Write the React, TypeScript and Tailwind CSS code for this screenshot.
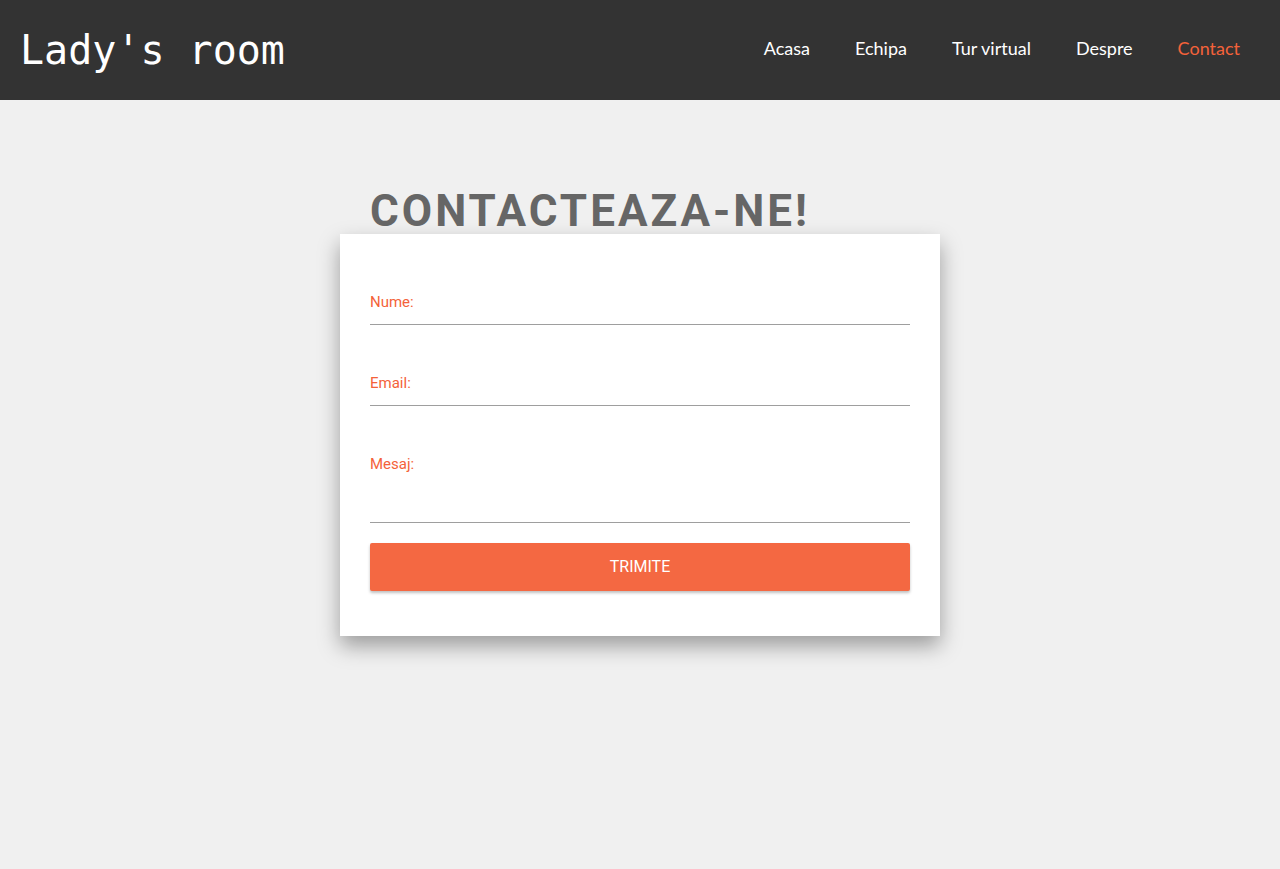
export default function App() {
  const links = ["Acasa", "Echipa", "Tur virtual", "Despre", "Contact"];

  return (
    <div className="min-h-screen bg-[#f0f0f0]">
      <header className="h-[100px] bg-[#333333] flex items-center justify-between pl-5 pr-10">
        <h1 className="text-[40px] text-white font-['DejaVu_Sans_Mono',monospace] leading-none">
          Lady's room
        </h1>
        <nav className="flex gap-[45px] mb-1 font-['Lato',sans-serif] text-[18px]">
          {links.map((l) => (
            <a
              key={l}
              href="#"
              className={l === "Contact" ? "text-[#f4623a]" : "text-white"}
            >
              {l}
            </a>
          ))}
        </nav>
      </header>

      <main className="w-[600px] mx-auto pt-[89px] font-['Roboto',sans-serif]">
        <h2 className="pl-[30px] text-[44px] leading-none font-bold tracking-[3px] text-[#666666]">
          CONTACTEAZA-NE!
        </h2>
        <form
          className="mt-px bg-white px-[30px] pt-[58px] pb-[45px] shadow-[0_10px_20px_rgba(0,0,0,0.35)]"
          onSubmit={(e) => e.preventDefault()}
        >
          <div className="flex flex-col">
            <label className="text-[15px] leading-5 text-[#f4623a]">Nume:</label>
            <input className="h-[13px] border-b border-[#9e9e9e] outline-none" />
          </div>
          <div className="flex flex-col mt-12">
            <label className="text-[15px] leading-5 text-[#f4623a]">Email:</label>
            <input className="h-[13px] border-b border-[#9e9e9e] outline-none" />
          </div>
          <div className="flex flex-col mt-12">
            <label className="text-[15px] leading-5 text-[#f4623a]">Mesaj:</label>
            <textarea className="h-[49px] resize-none border-b border-[#9e9e9e] outline-none" />
          </div>
          <button
            type="submit"
            className="mt-5 w-full h-12 rounded-[2px] bg-[#f46842] text-white text-[16px] shadow-[0_2px_3px_rgba(0,0,0,0.25)]"
          >
            TRIMITE
          </button>
        </form>
      </main>
    </div>
  );
}
